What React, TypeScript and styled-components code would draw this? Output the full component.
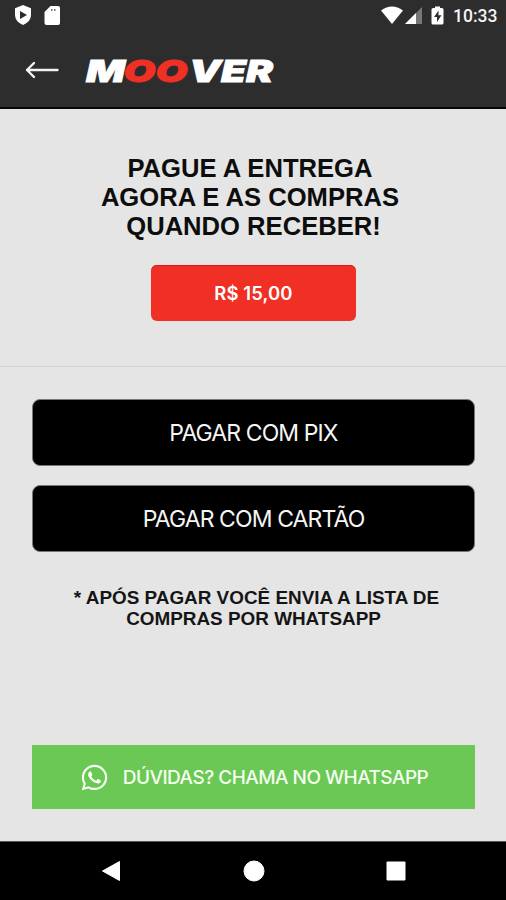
import React from "react";
import styled, { createGlobalStyle } from "styled-components";
import { FaWhatsapp } from "react-icons/fa";

const GlobalStyle = createGlobalStyle`
  *, *::before, *::after { box-sizing: border-box; }
  body { margin: 0; background: #e5e5e5; }
  button { border: 0; padding: 0; margin: 0; }
  svg { display: block; flex: none; }
`;

const Screen = styled.div`
  display: flex;
  flex-direction: column;
  width: 506px;
  height: 900px;
  overflow: hidden;
  background: #e5e5e5;
`;

const Header = styled.header`
  height: 109px;
  flex: none;
  background: #2d2d2d;
  border-bottom: 2px solid #050505;
`;

const StatusBar = styled.div`
  display: flex;
  justify-content: space-between;
  height: 32px;
  padding: 0 9px 0 12px;
`;

const StatusGroup = styled.div`
  display: flex;
  align-items: center;
`;

const Clock = styled.span`
  width: 44px;
  margin-left: 9px;
  font: 500 17.5px/32px Roboto, sans-serif;
  color: #f4f4f4;
  white-space: nowrap;
`;

const AppBar = styled.div`
  display: flex;
  align-items: center;
  height: 75px;
  padding: 0 0 0 24px;
`;

const BackButton = styled.button`
  width: 36px;
  height: 24px;
  margin-right: 22px;
  background: none;
`;

const Logo = styled.svg`
  font: italic 900 30px Inter, sans-serif;
`;

const Offer = styled.section`
  display: flex;
  flex-direction: column;
  align-items: center;
  height: 258px;
  flex: none;
  padding: 45px 0 0 1px;
  border-bottom: 1px solid #d4d4d4;
`;

const Title = styled.h1`
  margin: 0 0 24px;
  font: 700 25.6px/29px "Liberation Sans", Arial, sans-serif;
  color: #0d0d0d;
  text-align: center;
  white-space: nowrap;
`;

const Price = styled.div`
  width: 205px;
  height: 56px;
  border-radius: 6px;
  background: #f03024;
  box-shadow: inset 0 1px 0 #e3170d;
  color: #fff;
  font: 600 18.5px/56px Inter, sans-serif;
  letter-spacing: 0.1px;
  text-align: center;
`;

const Payment = styled.main`
  display: flex;
  flex-direction: column;
  flex: 1;
  padding: 32px 31px 0 32px;
`;

const PayButton = styled.button`
  height: 67px;
  margin-bottom: 19px;
  border: 1px solid #777;
  border-radius: 8px;
  background: #000;
  color: #f5f5f5;
  font: 400 23px/64px Inter, sans-serif;
  padding-top: 1px;
  letter-spacing: -0.9px;
`;

const Note = styled.p`
  margin: 16px 0 0;
  font: 700 18.9px/21px "Liberation Sans", Arial, sans-serif;
  color: #151515;
  text-align: center;
  white-space: nowrap;
`;

const NoteLead = styled.span`
  padding-left: 6px;
`;

const HelpButton = styled.button`
  display: flex;
  align-items: center;
  justify-content: center;
  gap: 14px;
  height: 64px;
  margin: auto 0 32px;
  padding: 1px 0 0 1px;
  background: #6bc854;
  color: #f4fff0;
  font: 500 19px/64px Inter, sans-serif;
  letter-spacing: -0.52px;
  white-space: nowrap;
`;

const NavBar = styled.nav`
  display: flex;
  justify-content: space-between;
  align-items: center;
  height: 59px;
  flex: none;
  padding: 0 99px 0 100px;
  background: #000;
  border-top: 1px solid #555;
`;

const ShieldIcon = () => (
  <svg width="22" height="24" viewBox="0 0 22 24">
    <path d="M11 1 19 4.3V11q0 6.5-8 10-8-3.500-8-10V4.300z" fill="#fff" />
    <path d="M8 7v8l7-4z" fill="#2d2d2d" />
  </svg>
);

const CardIcon = () => (
  <svg width="28" height="24" viewBox="0 0 28 24">
    <path d="M16.500 2H24q2 0 2 2v15q0 2-2 2H12.500q-2 0-2-2V8z" fill="#fff" />
    <path d="M17 5h1.500v2H17zm3 0h1.500v2H20z" fill="#777" />
  </svg>
);

const SignalIcons = () => (
  <svg width="64" height="24" viewBox="0 0 64 24">
    <path d="M1 6.500Q12 -1.500 23 6.500L12 20z" fill="#fff" />
    <path d="M42 3v17H25z" fill="#777" />
    <path d="M36 9v11H25z" fill="#fff" />
    <path d="M55 2.500h5V4h2q1.500 0 1.500 1.500V19q0 1.500-1.500 1.500h-9q-1.500 0-1.500-1.500V5.500Q51.500 4 53 4h2z" fill="#fff" />
    <path d="M58.500 6.500 54 13h3v5l4.500-6.800h-3z" fill="#2d2d2d" />
  </svg>
);

const BackArrow = () => (
  <svg width="36" height="24" viewBox="0 0 36 24" fill="none" stroke="#f4f4f4" strokeWidth="2.400" strokeLinecap="round" strokeLinejoin="round">
    <path d="M33.500 12H3M10 5 3 12l7 7" />
  </svg>
);

const NavIcon = ({ d }: { d: string }) => (
  <svg width="22" height="22" viewBox="0 0 22 22">
    <path d={d} fill="#fff" stroke="#fff" strokeWidth="1" strokeLinejoin="round" />
  </svg>
);

export default function App() {
  return (
    <>
      <GlobalStyle />
      <Screen>
        <Header>
          <StatusBar>
            <StatusGroup>
              <ShieldIcon />
              <CardIcon />
            </StatusGroup>
            <StatusGroup>
              <SignalIcons />
              <Clock>10:33</Clock>
            </StatusGroup>
          </StatusBar>
          <AppBar>
            <BackButton aria-label="Voltar"><BackArrow /></BackButton>
            <Logo width="200" height="40" viewBox="0 0 200 40" role="img" aria-label="Moover">
              <g strokeWidth="0.800">
                <text x="4" y="31.600" fill="#fff" stroke="#fff" textLength="39" lengthAdjust="spacingAndGlyphs">M</text>
                <text x="107" y="31.600" fill="#fff" stroke="#fff" textLength="84" lengthAdjust="spacingAndGlyphs">VER</text>
                <text x="41.500" y="31.600" fill="#f03024" stroke="#f03024" textLength="64" lengthAdjust="spacingAndGlyphs">OO</text>
              </g>
            </Logo>
          </AppBar>
        </Header>
        <Offer>
          <Title>
            PAGUE A ENTREGA&nbsp;<br />
            AGORA E AS COMPRAS&nbsp;<br />
            QUANDO RECEBER!
          </Title>
          <Price>R$ 15,00</Price>
        </Offer>
        <Payment>
          <PayButton>PAGAR COM PIX</PayButton>
          <PayButton>PAGAR COM CARTÃO</PayButton>
          <Note>
            <NoteLead>* APÓS PAGAR VOCÊ ENVIA A LISTA DE</NoteLead><br />
            COMPRAS POR WHATSAPP
          </Note>
          <HelpButton>
            <FaWhatsapp size={29} />
            DÚVIDAS? CHAMA NO WHATSAPP
          </HelpButton>
        </Payment>
        <NavBar>
          <NavIcon d="M19.500 1.500v19L2.500 11z" />
          <NavIcon d="M11 1a10 10 0 1 0 0 20a10 10 0 1 0 0-20z" />
          <NavIcon d="M2 2h18v18H2z" />
        </NavBar>
      </Screen>
    </>
  );
}
